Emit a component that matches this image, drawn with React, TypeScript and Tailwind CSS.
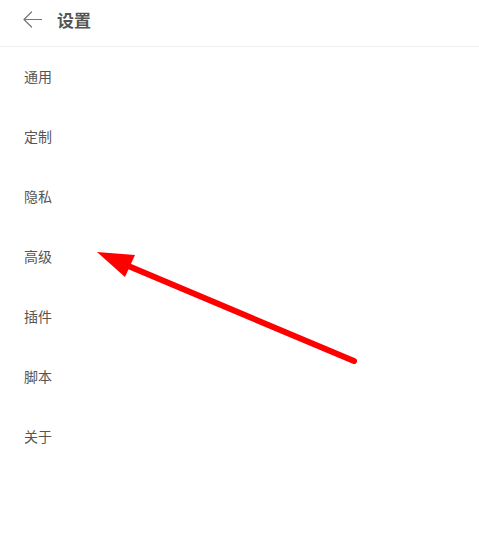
const items = ['通用', '定制', '隐私', '高级', '插件', '脚本', '关于'];

export default function App() {
  return (
    <div className="relative w-[479px] h-[535px] bg-white overflow-hidden" style={{ fontFamily: '"Noto Sans CJK SC", "Noto Sans", sans-serif' }}>
      <div className="flex items-center h-[47px] border-b border-[#eeeeee] pl-[23px] pb-[7px]">
        <svg width="19" height="17" viewBox="0 0 19 17" fill="none" stroke="#777" strokeWidth="1.2" strokeLinecap="round" strokeLinejoin="round">
          <path d="M18.5 8.5H1M8.5 1L1 8.5l7.5 7.5" />
        </svg>
        <span className="ml-[15px] text-[17px] font-bold text-[#555] leading-none">设置</span>
      </div>
      <ul className="-mt-px">
        {items.map((t) => (
          <li key={t} className="flex items-center h-[60px] pl-6 text-[14px] text-[#555]">
            {t}
          </li>
        ))}
      </ul>
      <svg className="absolute left-0 top-0 pointer-events-none" width="479" height="535">
        <line x1="354" y1="361" x2="126" y2="265" stroke="#ff0000" strokeWidth="6" strokeLinecap="round" />
        <polygon points="97,252 135,255 125,277" fill="#ff0000" />
      </svg>
    </div>
  );
}
